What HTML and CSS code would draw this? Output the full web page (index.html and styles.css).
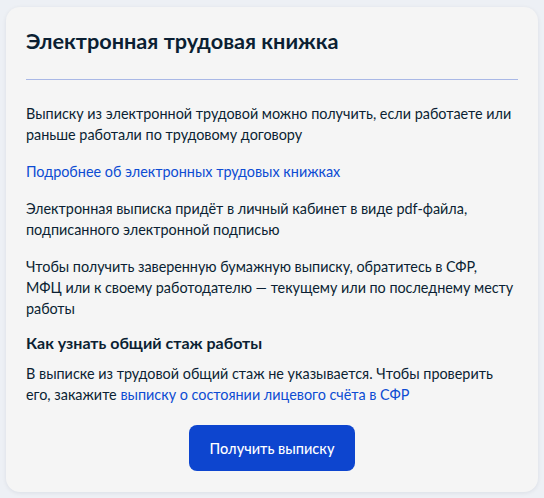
FILE: index.html
```html
<!DOCTYPE html>
<html lang="ru">
<head>
<meta charset="utf-8">
<title>Электронная трудовая книжка</title>
<link rel="stylesheet" href="styles.css">
</head>
<body>
<div class="page">
  <section class="card">
    <h2 class="card-title">Электронная трудовая книжка</h2>
    <hr class="divider">
    <p class="text">Выписку из электронной трудовой можно получить, если работаете или раньше работали по трудовому договору</p>
    <p class="text"><a class="link" href="#">Подробнее об электронных трудовых книжках</a></p>
    <p class="text">Электронная выписка придёт в личный кабинет в виде pdf-файла, подписанного электронной подписью</p>
    <p class="text text-snug">Чтобы получить заверенную бумажную выписку, обратитесь в СФР, МФЦ&nbsp;или к своему работодателю — текущему или по последнему месту работы</p>
    <h3 class="subtitle">Как узнать общий стаж работы</h3>
    <p class="text text-tight">В выписке из трудовой общий стаж не указывается. Чтобы проверить его, закажите <a class="link" href="#">выписку о состоянии лицевого счёта в СФР</a></p>
    <div class="actions">
      <button class="btn" type="button">Получить выписку</button>
    </div>
  </section>
</div>
</body>
</html>
```

FILE: styles.css
```css
html, body {
  margin: 0;
  padding: 0;
  background: #edf0f5;
}

body {
  font-family: Lato, "Noto Sans", sans-serif;
  color: #0b1f33;
}

.page {
  padding: 7px 6px 6px;
}

.card {
  background: #f5f5f5;
  border-radius: 14px;
  box-shadow: 0 1px 4px rgba(11, 31, 51, 0.08);
  padding: 20px 20px 21px;
}

.card-title {
  margin: 0;
  font-size: 21.7px;
  line-height: 28px;
  font-weight: 700;
  color: #0b1f33;
}

.divider {
  margin: 24px 0 0;
  border: 0;
  height: 1px;
  background: #a9b8e6;
}

.text {
  margin: 16px 0 0;
  font-size: 14.4px;
  line-height: 21px;
}

.text-snug {
  letter-spacing: -0.03px;
}

.divider + .text {
  margin-top: 23px;
}

.text-tight {
  margin-top: 8px;
}

.link {
  color: #0d4cd3;
  text-decoration: none;
}

.subtitle {
  margin: 12px 0 0;
  font-size: 16px;
  line-height: 24px;
  font-weight: 700;
}

.actions {
  display: flex;
  justify-content: center;
  margin-top: 20px;
}

.btn {
  width: 166px;
  height: 46px;
  border: 0;
  border-radius: 8px;
  background: #0d45cf;
  color: #ffffff;
  font-family: Lato, "Noto Sans", sans-serif;
  font-size: 14.5px;
  font-weight: 500;
  cursor: pointer;
}
```
